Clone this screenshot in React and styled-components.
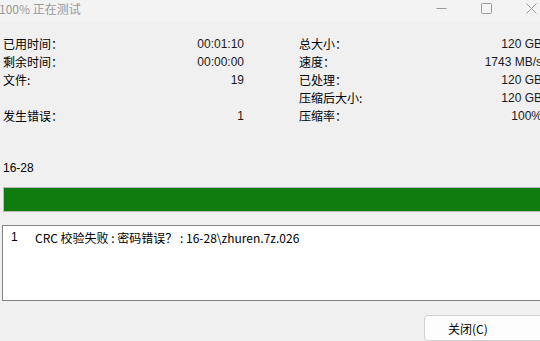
import React from "react";
import styled, { createGlobalStyle } from "styled-components";

const GlobalStyle = createGlobalStyle`
  html, body {
    margin: 0;
    padding: 0;
    overflow: hidden;
    background: #f0f0f0;
  }
`;

const Window = styled.div`
  width: 560px;
  height: 341px;
  display: flex;
  flex-direction: column;
  background: #f0f0f0;
  font-family: "Noto Sans CJK SC", "Liberation Sans", sans-serif;
  font-size: 12px;
  color: #000;
  overflow: hidden;
`;

const TitleBar = styled.div`
  height: 22px;
  display: flex;
  align-items: center;
  background: #f3f3f3;
  flex-shrink: 0;
`;

const Title = styled.div`
  flex: 1;
  color: #9a9a9a;
  font-size: 12px;
  margin-left: -1px;
  line-height: 16px;
  margin-top: -4px;
`;

const Controls = styled.div`
  display: flex;
  width: 150px;
  margin-top: -6px;
  margin-right: -9px;
`;

const ControlButton = styled.div`
  width: 45px;
  height: 20px;
  display: flex;
  align-items: center;
  justify-content: center;
  color: #9a9a9a;
`;

const Stats = styled.div`
  display: grid;
  grid-template-columns: 241px 243px;
  column-gap: 55px;
  padding: 13px 0 0 3px;
`;

const Column = styled.div`
  display: flex;
  flex-direction: column;
`;

const Row = styled.div`
  height: 18px;
  display: flex;
  align-items: center;
  justify-content: space-between;
  line-height: 18px;
  white-space: nowrap;
`;

const Value = styled.span`
  font-family: "Liberation Sans", "Noto Sans CJK SC", sans-serif;
  color: #1a1a1a;
`;

const FileName = styled.div`
  margin: 34px 0 0 3px;
  height: 18px;
  line-height: 18px;
  font-family: "Liberation Sans", sans-serif;
`;

const ProgressTrack = styled.div`
  margin: 10px 0 0 3px;
  height: 26px;
  border: 1px solid #bcbcbc;
  background: #e6e6e6;
  box-sizing: border-box;
`;

const ProgressFill = styled.div`
  height: 100%;
  background: #107c10;
`;

const ListBox = styled.div`
  margin: 13px 0 0 2px;
  height: 78px;
  border: 1px solid #828282;
  background: #fff;
  box-sizing: border-box;
  padding-top: 3px;
`;

const ListRow = styled.div`
  display: flex;
  height: 17px;
  line-height: 17px;
  white-space: nowrap;
`;

const ListIndex = styled.span`
  width: 32px;
  padding-left: 8px;
  box-sizing: border-box;
  font-family: "Liberation Sans", sans-serif;
`;

const Footer = styled.div`
  display: flex;
  padding: 14px 0 0 424px;
`;

const Button = styled.div`
  width: 130px;
  height: 26px;
  border: 1px solid #d0d0d0;
  border-radius: 4px;
  background: #fdfdfd;
  box-sizing: border-box;
  display: flex;
  justify-content: flex-start;
  padding-left: 23px;
  align-items: center;
  font-size: 12px;
`;

const left = [
  ["已用时间：", "00:01:10"],
  ["剩余时间：", "00:00:00"],
  ["文件:", "19"],
  ["", ""],
  ["发生错误：", "1"],
];

const right = [
  ["总大小：", "120 GB"],
  ["速度：", "1743 MB/s"],
  ["已处理：", "120 GB"],
  ["压缩后大小:", "120 GB"],
  ["压缩率：", "100%"],
];

const StatColumn = ({ items }) => (
  <Column>
    {items.map(([label, value], i) => (
      <Row key={i}>
        <span>{label}</span>
        <Value>{value}</Value>
      </Row>
    ))}
  </Column>
);

export default function App() {
  return (
    <Window>
      <GlobalStyle />
      <TitleBar>
        <Title>100% 正在测试</Title>
        <Controls>
          <ControlButton>
            <svg width="11" height="11" viewBox="0 0 11 11">
              <line x1="0.5" y1="5.5" x2="10.5" y2="5.5" stroke="#9a9a9a" strokeWidth="1" />
            </svg>
          </ControlButton>
          <ControlButton>
            <svg width="11" height="11" viewBox="0 0 11 11">
              <rect x="0.5" y="0.5" width="10" height="10" rx="1" fill="none" stroke="#9a9a9a" strokeWidth="1" />
            </svg>
          </ControlButton>
          <ControlButton>
            <svg width="11" height="11" viewBox="0 0 11 11">
              <path d="M0.5 0.5 L10.5 10.5 M10.5 0.5 L0.5 10.5" stroke="#9a9a9a" strokeWidth="1" />
            </svg>
          </ControlButton>
        </Controls>
      </TitleBar>
      <Stats>
        <StatColumn items={left} />
        <StatColumn items={right} />
      </Stats>
      <FileName>16-28</FileName>
      <ProgressTrack>
        <ProgressFill style={{ width: "100%" }} />
      </ProgressTrack>
      <ListBox>
        <ListRow>
          <ListIndex>1</ListIndex>
          <span>CRC 校验失败 : 密码错误？ : 16-28\zhuren.7z.026</span>
        </ListRow>
      </ListBox>
      <Footer>
        <Button>关闭(C)</Button>
      </Footer>
    </Window>
  );
}
